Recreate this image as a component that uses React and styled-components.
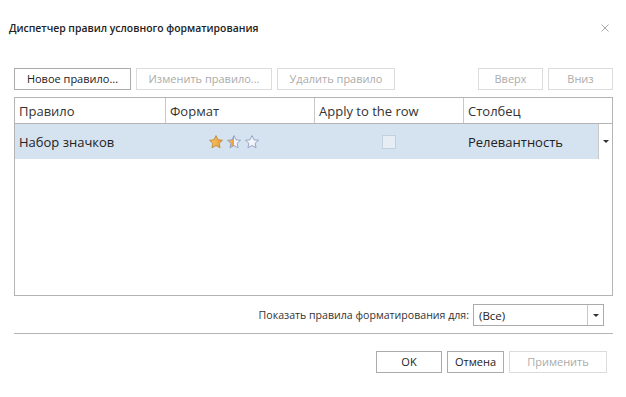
import styled, { createGlobalStyle } from "styled-components";

const GlobalStyle = createGlobalStyle`
  html, body {
    margin: 0;
    padding: 0;
    background: #ffffff;
  }
  body {
    font-family: "Open Sans", "Liberation Sans", sans-serif;
    color: #333333;
  }
`;

const columns = ["Правило", "Формат", "Apply to the row", "Столбец"];

const Star = ({ kind }) => {
   const id = `g-${kind}`;
   const pts =
      "7,0.6 9,4.8 13.5,5.3 10.1,8.3 11.1,12.8 7,10.5 2.9,12.8 3.9,8.3 0.5,5.3 5,4.8";
   return (
      <svg width="14" height="14" viewBox="0 0 14 14">
         <defs>
            <linearGradient id={id} x1="0" x2="1" y1="0" y2="0">
               {kind === "full" && (
                  <>
                     <stop offset="0" stopColor="#f8c864" />
                     <stop offset="1" stopColor="#ec9c34" />
                  </>
               )}
               {kind === "half" && (
                  <>
                     <stop offset="0" stopColor="#f8c864" />
                     <stop offset="0.5" stopColor="#ec9c34" />
                     <stop offset="0.5" stopColor="#f4f6fb" />
                     <stop offset="1" stopColor="#f4f6fb" />
                  </>
               )}
               {kind === "empty" && (
                  <>
                     <stop offset="0" stopColor="#f8f9fd" />
                     <stop offset="1" stopColor="#eef1f8" />
                  </>
               )}
            </linearGradient>
         </defs>
         <polygon
            points={pts}
            fill={`url(#${id})`}
            stroke={kind === "full" ? "#c0883a" : "#8d9cc2"}
            strokeWidth="0.9"
            strokeLinejoin="round"
         />
      </svg>
   );
};

const App = () => {
   return (
      <>
         <GlobalStyle />
         <Dialog>
            <TitleBar>
               <Title>Диспетчер правил условного форматирования</Title>
               <CloseButton>
                  <svg width="8" height="8" viewBox="0 0 8 8">
                     <path d="M0.5 0.5 L7.5 7.5 M7.5 0.5 L0.5 7.5" stroke="#a8a8a8" strokeWidth="1" />
                  </svg>
               </CloseButton>
            </TitleBar>
            <Body>
               <Toolbar>
                  <Button $w={117}>Новое правило...</Button>
                  <Button $w={136} disabled>
                     Изменить правило...
                  </Button>
                  <Button $w={118} disabled>
                     Удалить правило
                  </Button>
                  <Spacer />
                  <Button $w={65} disabled>
                     Вверх
                  </Button>
                  <Button $w={65} disabled>
                     Вниз
                  </Button>
               </Toolbar>
               <Grid>
                  <HeaderRow>
                     {columns.map((c) => (
                        <HeaderCell key={c}>{c}</HeaderCell>
                     ))}
                  </HeaderRow>
                  <DataRow>
                     <Cell>Набор значков</Cell>
                     <Cell $center>
                        <Stars>
                           <Star kind="full" />
                           <Star kind="half" />
                           <Star kind="empty" />
                        </Stars>
                     </Cell>
                     <Cell $center>
                        <Check />
                     </Cell>
                     <Cell>Релевантность</Cell>
                     <RowDrop>
                        <Arrow />
                     </RowDrop>
                  </DataRow>
               </Grid>
               <FilterRow>
                  <FilterLabel>Показать правила форматирования для:</FilterLabel>
                  <Combo>
                     <ComboText>(Все)</ComboText>
                     <ComboButton>
                        <Arrow />
                     </ComboButton>
                  </Combo>
               </FilterRow>
               <Divider />
               <Footer>
                  <Button $w={66}>OK</Button>
                  <Button $w={57}>Отмена</Button>
                  <Button $w={98} disabled>
                     Применить
                  </Button>
               </Footer>
            </Body>
         </Dialog>
      </>
   );
};

export default App;

//style

const Dialog = styled.div`
   width: 626px;
   height: 397px;
   background: #ffffff;
   box-sizing: border-box;
`;

const TitleBar = styled.div`
   display: flex;
   align-items: center;
   justify-content: space-between;
   height: 56px;
   padding: 0 17px 0 9px;
`;

const Title = styled.div`
   font-size: 10.4px;
   font-weight: 600;
   color: #222222;
`;

const CloseButton = styled.div`
   display: flex;
   align-items: center;
   justify-content: center;
   width: 9px;
   height: 9px;
`;

const Body = styled.div`
   padding: 12px 13px 0 14px;
`;

const Toolbar = styled.div`
   display: flex;
   gap: 5px;
   margin-bottom: 7px;
`;

const Spacer = styled.div`
   flex: 1;
`;

const Button = styled.button`
   width: ${({ $w }) => $w}px;
   height: 22px;
   padding: 0;
   background: #ffffff;
   border: 1px solid ${({ disabled }) => (disabled ? "#dcdcdc" : "#ababab")};
   color: ${({ disabled }) => (disabled ? "#ababab" : "#222222")};
   font-family: "Open Sans", "Liberation Sans", sans-serif;
   font-size: 11px;
   line-height: 20px;
   box-sizing: border-box;
`;

const Grid = styled.div`
   height: 199px;
   border: 1px solid #b4b4b4;
   box-sizing: border-box;
`;

const HeaderRow = styled.div`
   display: grid;
   grid-template-columns: 150px 149px 149px 1fr;
   height: 25px;
   border-bottom: 1px solid #b4b4b4;
`;

const HeaderCell = styled.div`
   display: flex;
   align-items: center;
   padding-left: 4px;
   font-size: 13px;
   color: #333333;
   & + & {
      border-left: 1px solid #c8c8c8;
   }
`;

const DataRow = styled.div`
   display: grid;
   grid-template-columns: 150px 149px 149px 1fr 14px;
   height: 35px;
   background: #d5e3f0;
`;

const Cell = styled.div`
   display: flex;
   align-items: center;
   justify-content: ${({ $center }) => ($center ? "center" : "flex-start")};
   padding-left: ${({ $center }) => ($center ? "0" : "4px")};
   font-size: 13px;
   color: #222222;
   &:nth-child(4) {
      padding-left: 5px;
   }
`;

const Stars = styled.div`
   display: flex;
   gap: 4px;
   margin-right: 12px;
`;

const Check = styled.div`
   width: 14px;
   height: 14px;
   box-sizing: border-box;
   border: 1px solid #c3cfdb;
   background: #e6edf5;
`;

const RowDrop = styled.div`
   display: flex;
   align-items: center;
   justify-content: center;
   background: #ffffff;
   border-left: 1px solid #c8c8c8;
`;

const Arrow = styled.div`
   width: 0;
   height: 0;
   border-left: 3px solid transparent;
   border-right: 3px solid transparent;
   border-top: 3px solid #333333;
`;

const FilterRow = styled.div`
   display: flex;
   align-items: center;
   justify-content: flex-end;
   gap: 4px;
   height: 22px;
   margin-top: 8px;
   padding-right: 9px;
`;

const FilterLabel = styled.div`
   font-size: 10.6px;
   color: #333333;
`;

const Combo = styled.div`
   display: flex;
   width: 131px;
   height: 22px;
   box-sizing: border-box;
   border: 1px solid #ababab;
`;

const ComboText = styled.div`
   flex: 1;
   display: flex;
   align-items: center;
   padding-left: 5px;
   font-size: 11.5px;
   color: #222222;
`;

const ComboButton = styled.div`
   display: flex;
   align-items: center;
   justify-content: center;
   width: 15px;
   border-left: 1px solid #c8c8c8;
`;

const Divider = styled.div`
   height: 1px;
   background: #b4b4b4;
   margin-top: 7px;
`;

const Footer = styled.div`
   display: flex;
   justify-content: flex-end;
   gap: 5px;
   margin-top: 17px;
   padding-right: 6px;
`;
